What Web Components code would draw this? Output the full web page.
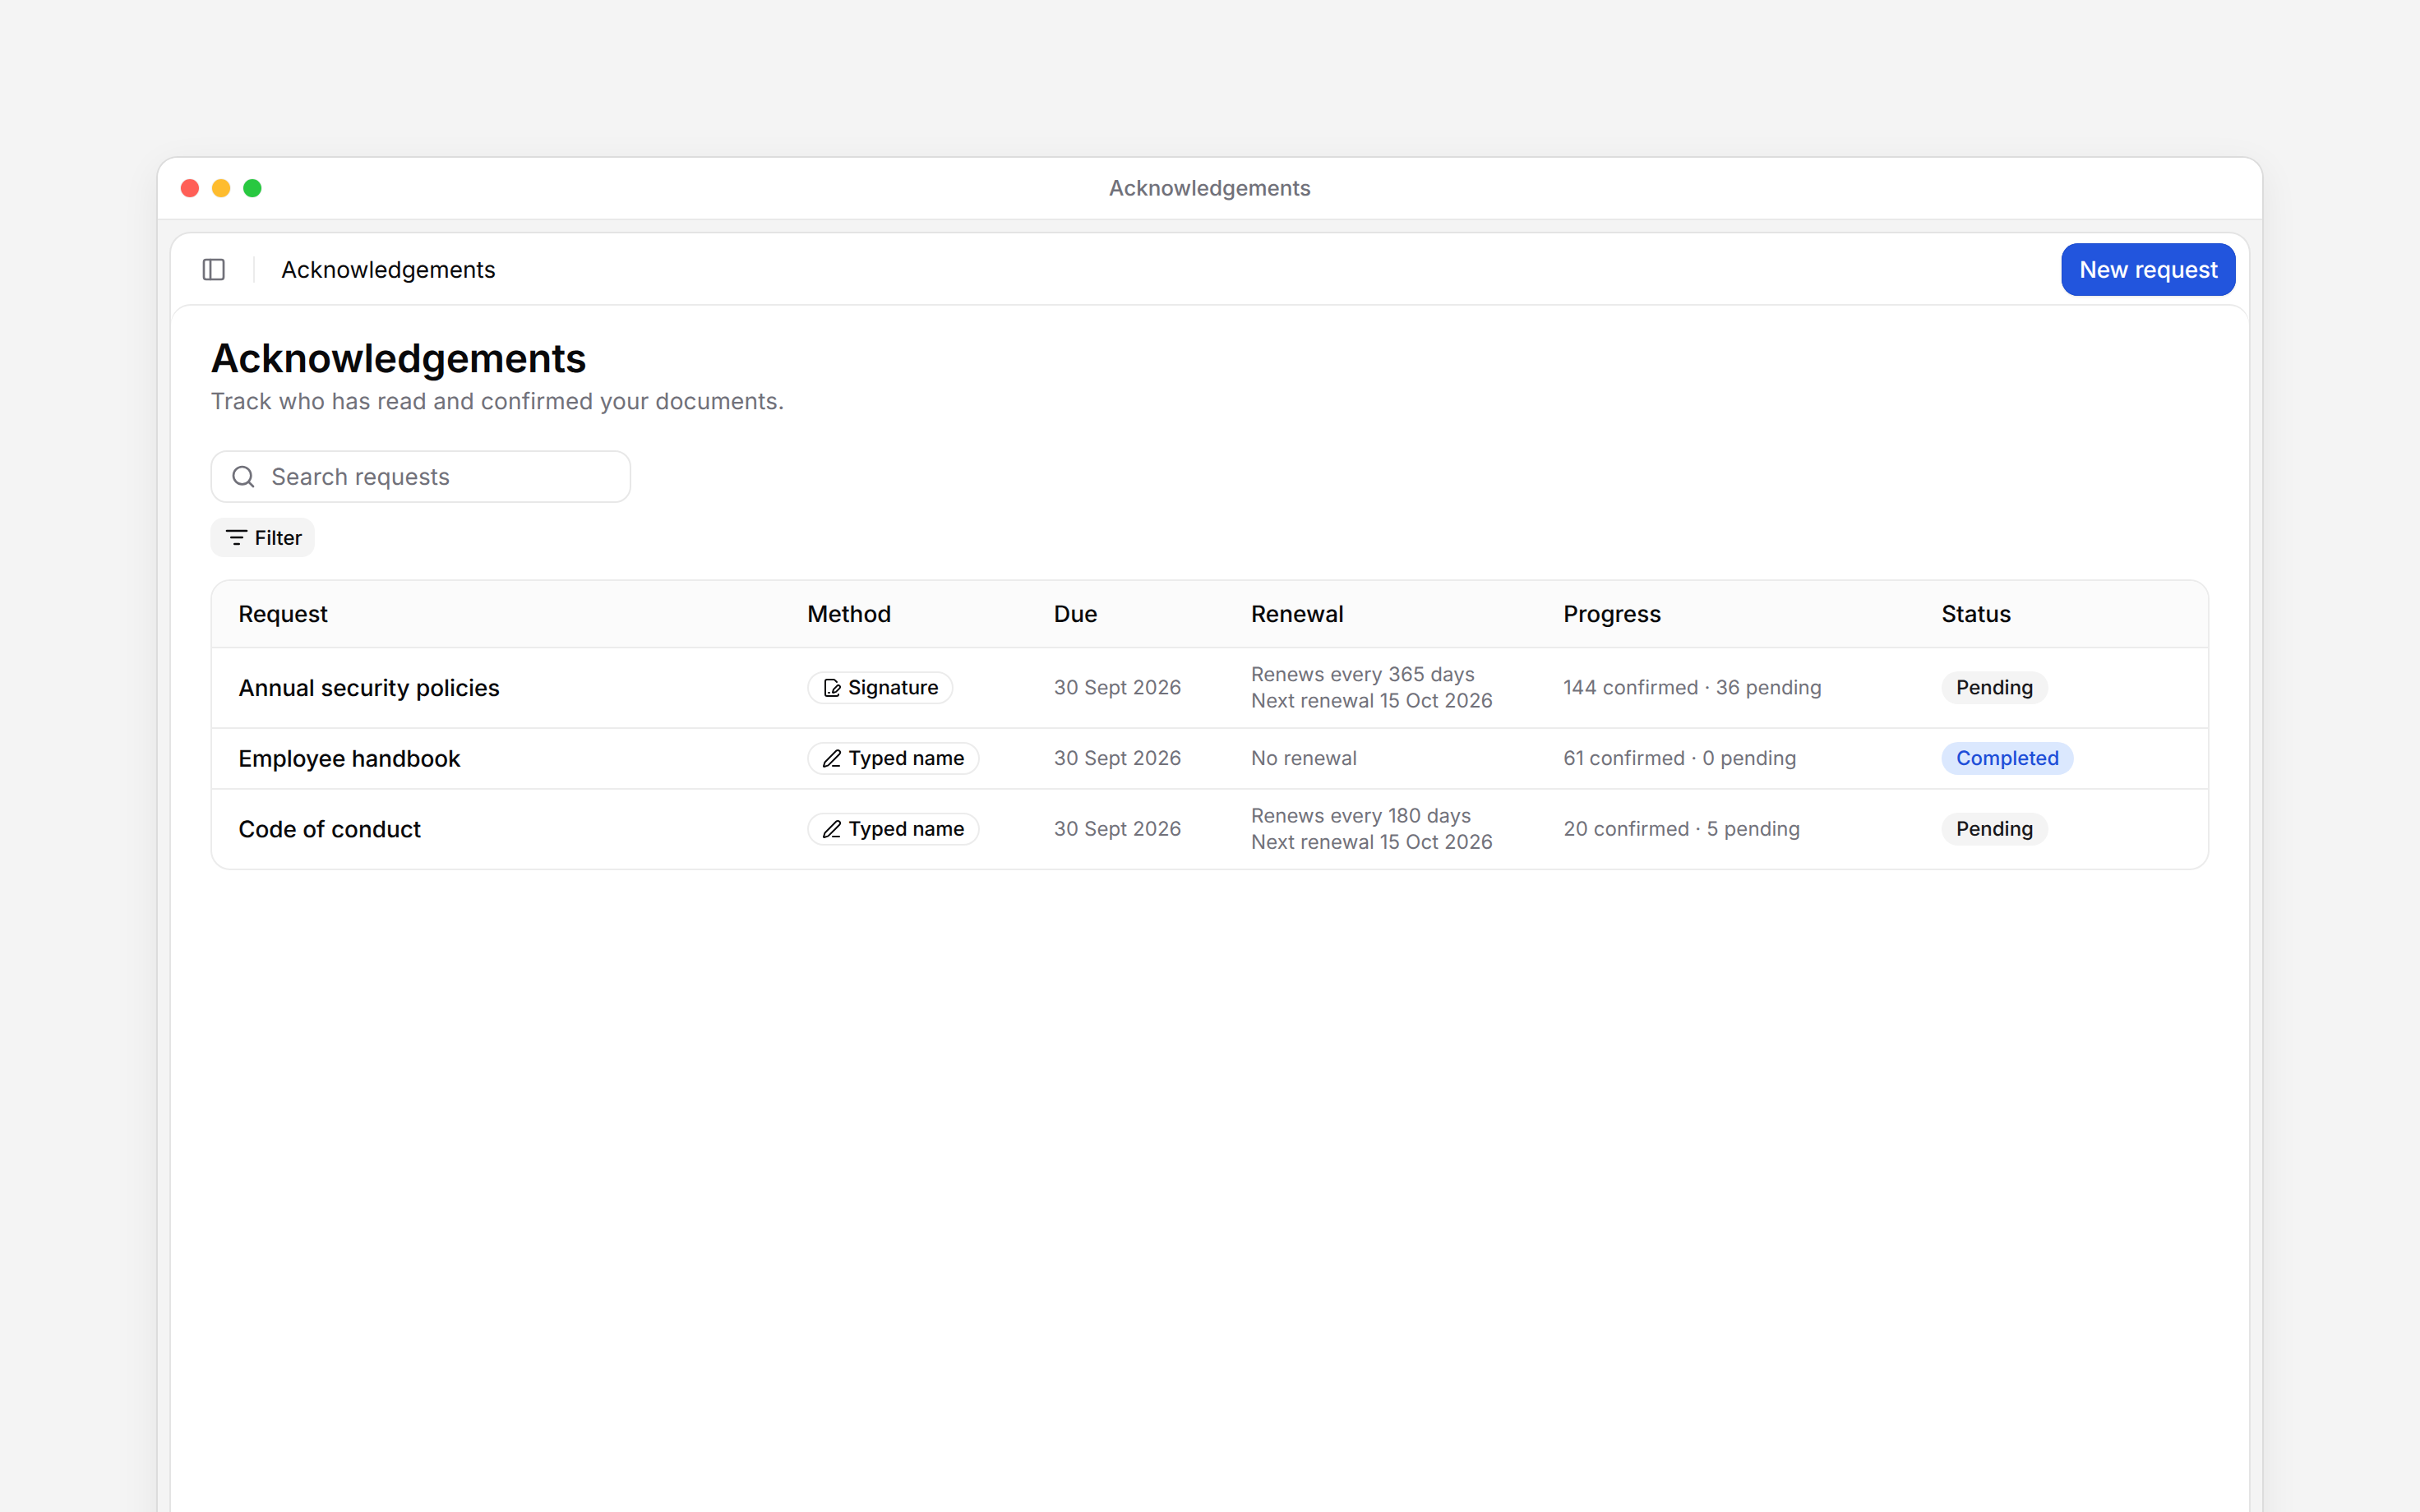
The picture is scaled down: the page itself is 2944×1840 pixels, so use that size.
<!DOCTYPE html>
<html lang="en">
<head>
<meta charset="utf-8">
<title>Acknowledgements</title>
<style>
html,body{margin:0;padding:0;height:100%;overflow:hidden;background:#f4f4f4;font-family:Inter,"Liberation Sans",sans-serif;color:#09090b;text-rendering:geometricPrecision;}
body{display:block;padding:192px 192px 0;box-sizing:border-box;-webkit-font-smoothing:antialiased;}
</style>
</head>
<body>
<app-window win-title="Acknowledgements">
  <app-topbar crumb="Acknowledgements" action="New request"></app-topbar>
  <app-panel>
    <page-head heading="Acknowledgements" sub="Track who has read and confirmed your documents."></page-head>
    <search-box placeholder="Search requests"></search-box>
    <filter-button>Filter</filter-button>
    <data-table>
      <table-row kind="head">
        <span>Request</span><span>Method</span><span>Due</span><span>Renewal</span><span>Progress</span><span>Status</span>
      </table-row>
      <table-row height="96">
        <span class="name">Annual security policies</span>
        <method-pill icon="sign">Signature</method-pill>
        <span>30 Sept 2026</span>
        <span>Renews every 365 days<br>Next renewal 15 Oct 2026</span>
        <span>144 confirmed · 36 pending</span>
        <status-pill>Pending</status-pill>
      </table-row>
      <table-row height="72">
        <span>Employee handbook</span>
        <method-pill icon="pen">Typed name</method-pill>
        <span>30 Sept 2026</span>
        <span>No renewal</span>
        <span>61 confirmed · 0 pending</span>
        <status-pill tone="done">Completed</status-pill>
      </table-row>
      <table-row height="94" last>
        <span>Code of conduct</span>
        <method-pill icon="pen">Typed name</method-pill>
        <span>30 Sept 2026</span>
        <span>Renews every 180 days<br>Next renewal 15 Oct 2026</span>
        <span>20 confirmed · 5 pending</span>
        <status-pill>Pending</status-pill>
      </table-row>
    </data-table>
  </app-panel>
</app-window>
<script>
function def(name, css, html){
  customElements.define(name, class extends HTMLElement{
    connectedCallback(){
      if(this.shadowRoot) return;
      const r=this.attachShadow({mode:'open'});
      r.innerHTML='<style>'+css+'</style>'+(typeof html==='function'?html(this):html);
    }
  });
}
const svg=(size,sw,body)=>`<svg width="${size}" height="${size}" viewBox="0 0 24 24" fill="none" stroke="currentColor" stroke-width="${sw}" stroke-linecap="round" stroke-linejoin="round" style="display:block;flex:none">${body}</svg>`;

def('app-window',`
  :host{display:block;width:2560px;height:1700px;background:#f4f4f4;border-radius:24px 24px 0 0;box-shadow:0 0 0 2px #dcdcdc,0 12px 48px rgba(0,0,0,.07);}
  .bar{height:74px;border-bottom:2px solid #e9e9e9;background:#fff;border-radius:24px 24px 0 0;display:flex;align-items:center;position:relative;padding-left:28px;}
  .lights{display:flex;gap:16px}
  .lights i{width:22px;height:22px;border-radius:50%;display:block;box-shadow:0 0 0 1px rgba(0,0,0,.06)}
  .t{position:absolute;left:0;right:0;text-align:center;font-size:26px;font-weight:500;color:#71717a;line-height:75px;top:0}
  .body{padding:16px 16px 0}
  .card{background:#fff;border-radius:24px 24px 0 0;box-shadow:0 0 0 2px #e4e4e4;height:1600px;}
`,h=>`<div class="bar"><div class="lights"><i style="background:#ff5f57"></i><i style="background:#febc2e"></i><i style="background:#28c840"></i></div><div class="t">${h.getAttribute('win-title')}</div></div><div class="body"><div class="card"><slot></slot></div></div>`);

def('app-topbar',`
  :host{display:flex;align-items:center;height:88px;box-sizing:border-box;padding:0 16px 0 36px;color:#09090b}
  .ic{color:#71717a}
  .div{width:2px;height:32px;background:#ececec;margin:0 32px}
  .c{font-size:28px;font-weight:400;flex:1}
  button{all:unset;box-sizing:border-box;height:64px;padding:0 21.5px;background:#2255dd;border-radius:20px;color:#fff;font:500 28px Inter,sans-serif;letter-spacing:-.003em;text-rendering:geometricPrecision;display:flex;align-items:center;box-shadow:0 0 0 1px #1f4fd0 inset,0 1px 3px rgba(0,0,0,.12)}
`,h=>`<span class="ic">${svg(32,2,'<rect width="18" height="18" x="3" y="3" rx="2"/><path d="M9 3v18"/>')}</span><span class="div"></span><span class="c">${h.getAttribute('crumb')}</span><button>${h.getAttribute('action')}</button>`);

def('app-panel',`
  :host{display:block;box-sizing:border-box;height:1500px;padding:32px 48px 0;border-radius:24px 24px 0 0;box-shadow:0 -2px 0 0 #ebebeb;background:#fff}
`,`<slot></slot>`);

def('page-head',`
  :host{display:block}
  h1{margin:0;font-size:48px;line-height:64px;font-weight:600;letter-spacing:-.004em;color:#09090b}
  p{margin:0;font-size:28px;line-height:40px;color:#71717a;letter-spacing:.005em}
`,h=>`<h1>${h.getAttribute('heading')}</h1><p>${h.getAttribute('sub')}</p>`);

def('search-box',`
  :host{display:flex;align-items:center;gap:18px;box-sizing:border-box;width:512px;height:64px;margin-top:40px;padding:0 22px;border:2px solid #e8e8e8;border-radius:20px;color:#71717a;font-size:28px;letter-spacing:.005em}
`,h=>`${svg(32,2,'<circle cx="11" cy="11" r="8"/><path d="m21 21-4.3-4.3"/>')}<span>${h.getAttribute('placeholder')}</span>`);

def('filter-button',`
  :host{display:inline-flex;align-items:center;gap:6px;box-sizing:border-box;height:48px;margin-top:18px;padding:0 15px 0 16px;background:#f4f4f4;border-radius:16px;font-size:24px;font-weight:500;vertical-align:top}
`,`${svg(32,2,'<path d="M3 6h18"/><path d="M7 12h10"/><path d="M10 18h4"/>')}<slot></slot>`);

def('data-table',`
  :host{display:block;margin-top:27px;border-radius:24px;border:2px solid #ececec;overflow:hidden;width:2432px;box-sizing:border-box}
`,`<slot></slot>`);

def('table-row',`
  :host{display:grid;grid-template-columns:692px 300px 240px 380px 460px 356px;align-items:center;font-size:24px;line-height:32px;color:#71717a;letter-spacing:.003em;border-bottom:2px solid #ececec;box-sizing:border-box;}
  :host([last]){border-bottom:0}
  :host([kind=head]){background:#fbfbfb;height:82px;font-size:28px;font-weight:500;color:#09090b;letter-spacing:0}
  ::slotted(*){padding-left:32px}
  ::slotted(:first-child){font-size:28px;font-weight:500;color:#09090b;letter-spacing:-.003em}
`,h=>{ if(h.getAttribute('height')) h.style.height=(+h.getAttribute('height')+2)+'px'; return '<slot></slot>'; });

const icons={
  sign:'<path d="m18 5-2.414-2.414A2 2 0 0 0 14.172 2H6a2 2 0 0 0-2 2v16a2 2 0 0 0 2 2h12a2 2 0 0 0 2-2"/><path d="M21.378 12.626a1 1 0 0 0-3.004-3.004l-4.01 4.012a2 2 0 0 0-.506.854l-.837 2.87a.5.5 0 0 0 .62.62l2.87-.837a2 2 0 0 0 .854-.506z"/><path d="M8 18h1"/>',
  pen:'<path d="M13 21h8"/><path d="M21.174 6.812a1 1 0 0 0-3.986-3.987L3.842 16.174a2 2 0 0 0-.5.83l-1.321 4.352a.5.5 0 0 0 .623.622l4.353-1.32a2 2 0 0 0 .83-.497z"/>'
};
def('method-pill',`
  :host{display:block;color:#09090b;letter-spacing:0}
  .p{display:inline-flex;align-items:center;gap:8px;box-sizing:border-box;height:40px;padding:0 16px;border:2px solid #ececec;border-radius:999px;font-size:24px;font-weight:500;line-height:32px;vertical-align:top}
`,h=>`<span class="p">${svg(24,2,icons[h.getAttribute('icon')])}<slot></slot></span>`);

def('status-pill',`
  :host{display:block;letter-spacing:0}
  .p{display:inline-flex;align-items:center;box-sizing:border-box;height:40px;padding:0 18px;border-radius:999px;background:#f4f4f4;color:#18181b;font-size:24px;font-weight:500;line-height:32px;vertical-align:top}
  :host([tone=done]) .p{background:#dbe8fe;color:#1d4ed8}
`,`<span class="p"><slot></slot></span>`);
</script>
</body>
</html>
